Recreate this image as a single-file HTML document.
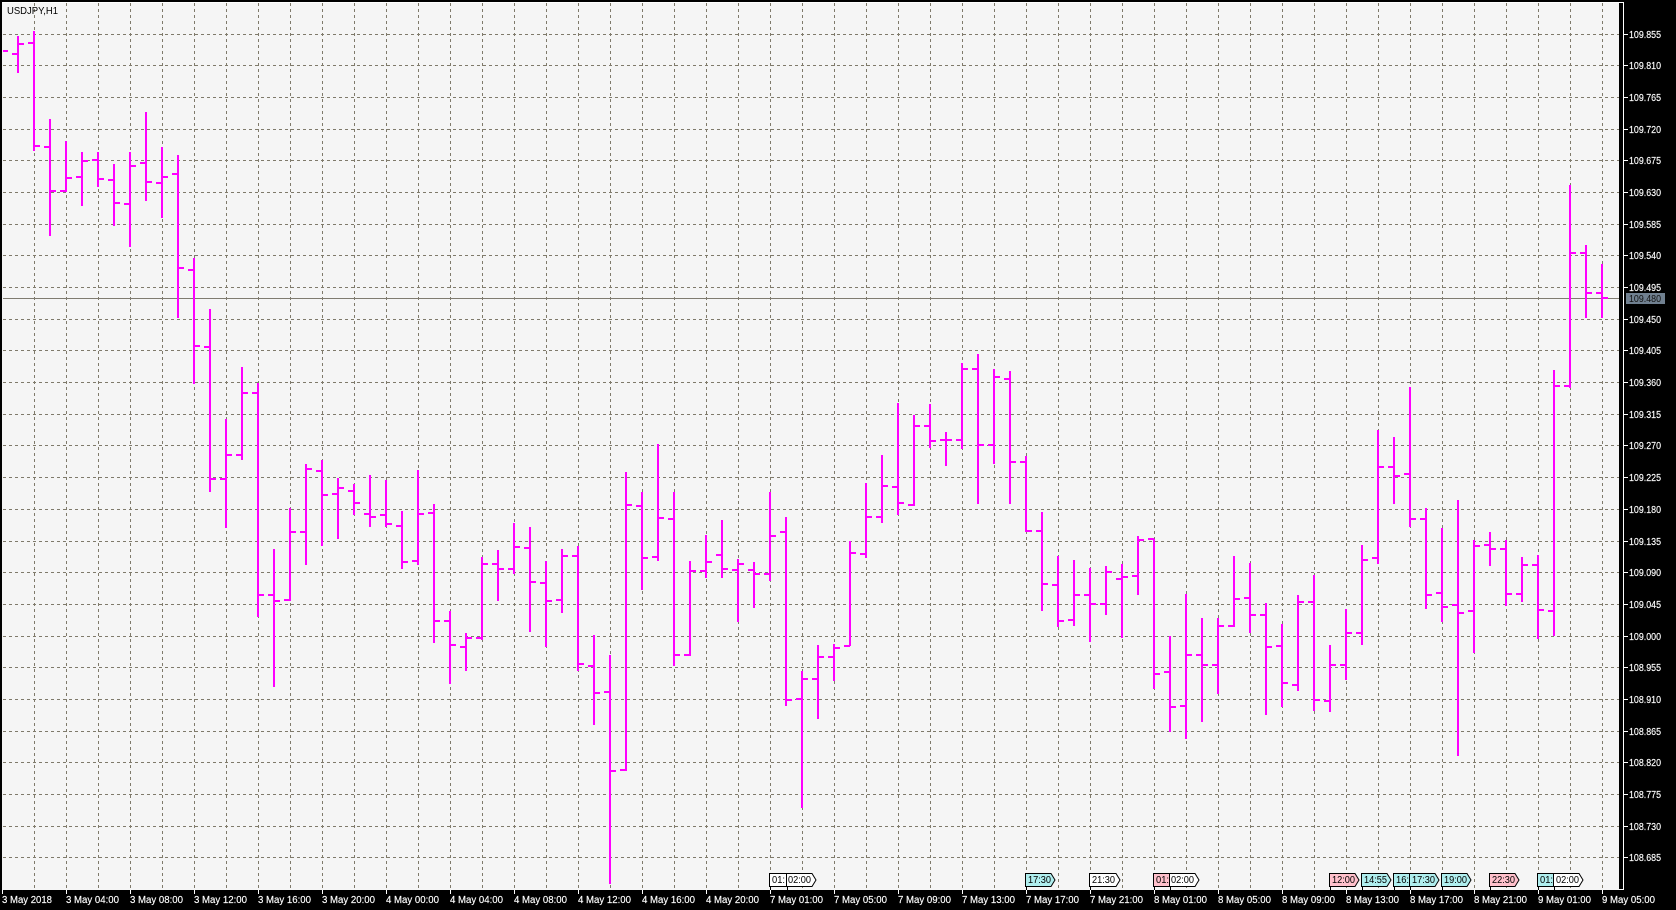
<!DOCTYPE html>
<html lang="en">
<head>
<meta charset="utf-8">
<title>USDJPY,H1</title>
<style>
html,body{margin:0;padding:0;background:#000;width:1676px;height:910px;overflow:hidden}
svg{display:block}
text{font-family:"Liberation Sans",sans-serif;font-size:10px}
.p text{fill:#fff;stroke:#fff;stroke-width:.15}
.t text{fill:#fff;stroke:#fff;stroke-width:.15}
.f path{stroke:#000;stroke-width:1}
.f text{fill:#000}
</style>
</head>
<body>
<svg xmlns="http://www.w3.org/2000/svg" width="1676" height="910" viewBox="0 0 1676 910">
<rect x="0" y="0" width="1676" height="910" fill="#000"/>
<rect x="2" y="3" width="1617" height="887" fill="#f5f5f5"/>
<g shape-rendering="crispEdges">
<path fill="none" stroke="#fff" d="M2 2.5H1623.5V889.5H1619"/>
<path fill="none" stroke="#7f7a6b" stroke-dasharray="3 3" d="M3 34.5H1619M3 65.5H1619M3 97.5H1619M3 129.5H1619M3 160.5H1619M3 192.5H1619M3 224.5H1619M3 255.5H1619M3 287.5H1619M3 319.5H1619M3 350.5H1619M3 382.5H1619M3 414.5H1619M3 445.5H1619M3 477.5H1619M3 509.5H1619M3 541.5H1619M3 572.5H1619M3 604.5H1619M3 636.5H1619M3 667.5H1619M3 699.5H1619M3 731.5H1619M3 762.5H1619M3 794.5H1619M3 826.5H1619M3 857.5H1619"/>
<path fill="none" stroke="#7f7a6b" stroke-dasharray="3 3" d="M34.5 3V890M66.5 3V890M98.5 3V890M130.5 3V890M162.5 3V890M194.5 3V890M226.5 3V890M258.5 3V890M290.5 3V890M322.5 3V890M354.5 3V890M386.5 3V890M418.5 3V890M450.5 3V890M482.5 3V890M514.5 3V890M546.5 3V890M578.5 3V890M610.5 3V890M642.5 3V890M674.5 3V890M706.5 3V890M738.5 3V890M770.5 3V890M802.5 3V890M834.5 3V890M866.5 3V890M898.5 3V890M930.5 3V890M962.5 3V890M994.5 3V890M1026.5 3V890M1058.5 3V890M1090.5 3V890M1122.5 3V890M1154.5 3V890M1186.5 3V890M1218.5 3V890M1250.5 3V890M1282.5 3V890M1314.5 3V890M1346.5 3V890M1378.5 3V890M1410.5 3V890M1442.5 3V890M1474.5 3V890M1506.5 3V890M1538.5 3V890M1570.5 3V890M1602.5 3V890"/>
<path fill="none" stroke="#7f7b70" d="M3 298.5H1619"/>
<path fill="none" stroke="#ff00ff" stroke-width="2" d="M3 51H8
M18 36V73M12 54H18M18 44H24
M34 31V151M28 43H34M34 146H40
M50 119V236M44 147H50M50 191H56
M66 141V192M60 191H66M66 178H72
M82 152V206M76 177H82M82 161H88
M98 152V187M92 160H98M98 179H104
M114 164V226M108 180H114M114 203H120
M130 152V247M124 204H130M130 166H136
M146 112V201M140 163H146M146 182H152
M162 147V218M156 183H162M162 177H168
M178 155V318M172 174H178M178 268H184
M194 258V384M188 270H194M194 346H200
M210 309V492M204 347H210M210 479H216
M226 419V528M220 479H226M226 455H232
M242 367V460M236 455H242M242 393H248
M258 383V617M252 393H258M258 595H264
M274 549V687M268 595H274M274 601H280
M290 508V601M284 600H290M290 532H296
M306 464V565M300 532H306M306 469H312
M322 460V546M316 471H322M322 495H328
M338 478V539M332 494H338M338 488H344
M354 484V515M348 491H354M354 503H360
M370 475V527M364 514H370M370 517H376
M386 480V527M380 515H386M386 524H392
M402 511V569M396 526H402M402 562H408
M418 470V565M412 561H418M418 514H424
M434 504V643M428 513H434M434 621H440
M450 611V684M444 621H450M450 645H456
M466 633V671M460 647H466M466 638H472
M482 557V640M476 638H482M482 564H488
M498 550V601M492 564H498M498 569H504
M514 523V574M508 569H514M514 547H520
M530 527V632M524 548H530M530 582H536
M546 561V647M540 583H546M546 601H552
M562 549V613M556 600H562M562 556H568
M578 546V671M572 556H578M578 664H584
M594 635V725M588 666H594M594 693H600
M610 655V884M604 692H610M610 771H616
M626 472V771M620 770H626M626 505H632
M642 492V590M636 506H642M642 558H648
M658 444V561M652 557H658M658 518H664
M674 492V666M668 519H674M674 655H680
M690 561V656M684 655H690M690 571H696
M706 535V578M700 571H706M706 562H712
M722 520V578M716 555H722M722 569H728
M738 559V622M732 570H738M738 564H744
M754 562V608M748 570H754M754 574H760
M770 492V581M764 574H770M770 536H776
M786 517V706M780 532H786M786 700H792
M802 671V808M796 699H802M802 679H808
M818 645V719M812 679H818M818 657H824
M834 644V681M828 657H834M834 648H840
M850 541V646M844 646H850M850 553H856
M866 483V558M860 554H866M866 517H872
M882 455V523M876 517H882M882 486H888
M898 403V515M892 487H898M898 503H904
M914 415V506M908 505H914M914 426H920
M930 404V448M924 426H930M930 441H936
M946 432V466M940 440H946M946 440H952
M962 363V449M956 440H962M962 369H968
M978 354V504M972 369H978M978 445H984
M994 369V464M988 445H994M994 377H1000
M1010 371V504M1004 379H1010M1010 462H1016
M1026 456V532M1020 462H1026M1026 531H1032
M1042 512V611M1036 531H1042M1042 584H1048
M1058 556V627M1052 585H1058M1058 621H1064
M1074 560V626M1068 620H1074M1074 595H1080
M1090 568V642M1084 595H1090M1090 604H1096
M1106 566V615M1100 604H1106M1106 572H1112
M1122 564V638M1116 579H1122M1122 577H1128
M1138 536V595M1132 576H1138M1138 540H1144
M1154 539V689M1148 539H1154M1154 674H1160
M1170 636V732M1164 672H1170M1170 707H1176
M1186 594V739M1180 706H1186M1186 655H1192
M1202 618V722M1196 655H1202M1202 665H1208
M1218 618V694M1212 665H1218M1218 626H1224
M1234 556V627M1228 626H1234M1234 599H1240
M1250 563V633M1244 598H1250M1250 615H1256
M1266 603V715M1260 615H1266M1266 647H1272
M1282 624V707M1276 646H1282M1282 683H1288
M1298 595V691M1292 685H1298M1298 602H1304
M1314 575V711M1308 602H1314M1314 700H1320
M1330 645V712M1324 701H1330M1330 665H1336
M1346 609V680M1340 665H1346M1346 633H1352
M1362 545V645M1356 633H1362M1362 560H1368
M1378 430V564M1372 558H1378M1378 467H1384
M1394 437V504M1388 467H1394M1394 476H1400
M1410 387V527M1404 474H1410M1410 519H1416
M1426 508V609M1420 519H1426M1426 595H1432
M1442 528V622M1436 593H1442M1442 607H1448
M1458 500V756M1452 605H1458M1458 613H1464
M1474 540V653M1468 611H1474M1474 546H1480
M1490 532V566M1484 545H1490M1490 549H1496
M1506 540V606M1500 549H1506M1506 594H1512
M1522 557V602M1516 594H1522M1522 565H1528
M1538 555V639M1532 565H1538M1538 610H1544
M1554 370V636M1548 611H1554M1554 386H1560
M1570 185V388M1564 386H1570M1570 253H1576
M1586 245V318M1580 253H1586M1586 293H1592
M1602 264V318M1596 293H1602M1602 298H1608"/>
<path fill="none" stroke="#fff" d="M1624 34.5H1628M1624 65.5H1628M1624 97.5H1628M1624 129.5H1628M1624 160.5H1628M1624 192.5H1628M1624 224.5H1628M1624 255.5H1628M1624 287.5H1628M1624 319.5H1628M1624 350.5H1628M1624 382.5H1628M1624 414.5H1628M1624 445.5H1628M1624 477.5H1628M1624 509.5H1628M1624 541.5H1628M1624 572.5H1628M1624 604.5H1628M1624 636.5H1628M1624 667.5H1628M1624 699.5H1628M1624 731.5H1628M1624 762.5H1628M1624 794.5H1628M1624 826.5H1628M1624 857.5H1628"/>
<path fill="none" stroke="#fff" d="M2.5 890V894M66.5 890V894M130.5 890V894M194.5 890V894M258.5 890V894M322.5 890V894M386.5 890V894M450.5 890V894M514.5 890V894M578.5 890V894M642.5 890V894M706.5 890V894M770.5 890V894M834.5 890V894M898.5 890V894M962.5 890V894M1026.5 890V894M1090.5 890V894M1154.5 890V894M1218.5 890V894M1282.5 890V894M1346.5 890V894M1410.5 890V894M1474.5 890V894M1538.5 890V894M1602.5 890V894"/>
<rect x="1626" y="293" width="39" height="11" fill="#708090"/>
</g>
<text x="7" y="14" textLength="51" lengthAdjust="spacingAndGlyphs" fill="#000">USDJPY,H1</text>
<g class="p">
<text x="1629" y="38" textLength="32" lengthAdjust="spacingAndGlyphs">109.855</text>
<text x="1629" y="69" textLength="32" lengthAdjust="spacingAndGlyphs">109.810</text>
<text x="1629" y="101" textLength="32" lengthAdjust="spacingAndGlyphs">109.765</text>
<text x="1629" y="133" textLength="32" lengthAdjust="spacingAndGlyphs">109.720</text>
<text x="1629" y="164" textLength="32" lengthAdjust="spacingAndGlyphs">109.675</text>
<text x="1629" y="196" textLength="32" lengthAdjust="spacingAndGlyphs">109.630</text>
<text x="1629" y="228" textLength="32" lengthAdjust="spacingAndGlyphs">109.585</text>
<text x="1629" y="259" textLength="32" lengthAdjust="spacingAndGlyphs">109.540</text>
<text x="1629" y="291" textLength="32" lengthAdjust="spacingAndGlyphs">109.495</text>
<text x="1629" y="323" textLength="32" lengthAdjust="spacingAndGlyphs">109.450</text>
<text x="1629" y="354" textLength="32" lengthAdjust="spacingAndGlyphs">109.405</text>
<text x="1629" y="386" textLength="32" lengthAdjust="spacingAndGlyphs">109.360</text>
<text x="1629" y="418" textLength="32" lengthAdjust="spacingAndGlyphs">109.315</text>
<text x="1629" y="449" textLength="32" lengthAdjust="spacingAndGlyphs">109.270</text>
<text x="1629" y="481" textLength="32" lengthAdjust="spacingAndGlyphs">109.225</text>
<text x="1629" y="513" textLength="32" lengthAdjust="spacingAndGlyphs">109.180</text>
<text x="1629" y="545" textLength="32" lengthAdjust="spacingAndGlyphs">109.135</text>
<text x="1629" y="576" textLength="32" lengthAdjust="spacingAndGlyphs">109.090</text>
<text x="1629" y="608" textLength="32" lengthAdjust="spacingAndGlyphs">109.045</text>
<text x="1629" y="640" textLength="32" lengthAdjust="spacingAndGlyphs">109.000</text>
<text x="1629" y="671" textLength="32" lengthAdjust="spacingAndGlyphs">108.955</text>
<text x="1629" y="703" textLength="32" lengthAdjust="spacingAndGlyphs">108.910</text>
<text x="1629" y="735" textLength="32" lengthAdjust="spacingAndGlyphs">108.865</text>
<text x="1629" y="766" textLength="32" lengthAdjust="spacingAndGlyphs">108.820</text>
<text x="1629" y="798" textLength="32" lengthAdjust="spacingAndGlyphs">108.775</text>
<text x="1629" y="830" textLength="32" lengthAdjust="spacingAndGlyphs">108.730</text>
<text x="1629" y="861" textLength="32" lengthAdjust="spacingAndGlyphs">108.685</text>
</g>
<text x="1629" y="302" textLength="32" lengthAdjust="spacingAndGlyphs" fill="#111">109.480</text>
<g class="t">
<text x="2" y="903" textLength="50" lengthAdjust="spacingAndGlyphs">3 May 2018</text>
<text x="66" y="903" textLength="53" lengthAdjust="spacingAndGlyphs">3 May 04:00</text>
<text x="130" y="903" textLength="53" lengthAdjust="spacingAndGlyphs">3 May 08:00</text>
<text x="194" y="903" textLength="53" lengthAdjust="spacingAndGlyphs">3 May 12:00</text>
<text x="258" y="903" textLength="53" lengthAdjust="spacingAndGlyphs">3 May 16:00</text>
<text x="322" y="903" textLength="53" lengthAdjust="spacingAndGlyphs">3 May 20:00</text>
<text x="386" y="903" textLength="53" lengthAdjust="spacingAndGlyphs">4 May 00:00</text>
<text x="450" y="903" textLength="53" lengthAdjust="spacingAndGlyphs">4 May 04:00</text>
<text x="514" y="903" textLength="53" lengthAdjust="spacingAndGlyphs">4 May 08:00</text>
<text x="578" y="903" textLength="53" lengthAdjust="spacingAndGlyphs">4 May 12:00</text>
<text x="642" y="903" textLength="53" lengthAdjust="spacingAndGlyphs">4 May 16:00</text>
<text x="706" y="903" textLength="53" lengthAdjust="spacingAndGlyphs">4 May 20:00</text>
<text x="770" y="903" textLength="53" lengthAdjust="spacingAndGlyphs">7 May 01:00</text>
<text x="834" y="903" textLength="53" lengthAdjust="spacingAndGlyphs">7 May 05:00</text>
<text x="898" y="903" textLength="53" lengthAdjust="spacingAndGlyphs">7 May 09:00</text>
<text x="962" y="903" textLength="53" lengthAdjust="spacingAndGlyphs">7 May 13:00</text>
<text x="1026" y="903" textLength="53" lengthAdjust="spacingAndGlyphs">7 May 17:00</text>
<text x="1090" y="903" textLength="53" lengthAdjust="spacingAndGlyphs">7 May 21:00</text>
<text x="1154" y="903" textLength="53" lengthAdjust="spacingAndGlyphs">8 May 01:00</text>
<text x="1218" y="903" textLength="53" lengthAdjust="spacingAndGlyphs">8 May 05:00</text>
<text x="1282" y="903" textLength="53" lengthAdjust="spacingAndGlyphs">8 May 09:00</text>
<text x="1346" y="903" textLength="53" lengthAdjust="spacingAndGlyphs">8 May 13:00</text>
<text x="1410" y="903" textLength="53" lengthAdjust="spacingAndGlyphs">8 May 17:00</text>
<text x="1474" y="903" textLength="53" lengthAdjust="spacingAndGlyphs">8 May 21:00</text>
<text x="1538" y="903" textLength="53" lengthAdjust="spacingAndGlyphs">9 May 01:00</text>
<text x="1602" y="903" textLength="53" lengthAdjust="spacingAndGlyphs">9 May 05:00</text>
</g>
<g class="f">
<path shape-rendering="crispEdges" fill="#ffffff" d="M769.5 873.5H786.5V886.5H769.5Z M770.5 887V890"/>
<text x="772" y="883" textLength="13" lengthAdjust="spacingAndGlyphs">01:</text>
<path fill="#ffffff" d="M786.5 873.5H812L816 880L812 886.5H786.5ZM787.5 887V890"/>
<text x="788" y="883" textLength="23" lengthAdjust="spacingAndGlyphs">02:00</text>

<path fill="#afeeee" d="M1025.5 873.5H1051L1055 880L1051 886.5H1025.5ZM1026.5 887V890"/>
<text x="1028" y="883" textLength="23" lengthAdjust="spacingAndGlyphs">17:30</text>

<path fill="#ffffff" d="M1089.5 873.5H1116L1120 880L1116 886.5H1089.5ZM1090.5 887V890"/>
<text x="1092" y="883" textLength="23" lengthAdjust="spacingAndGlyphs">21:30</text>

<path fill="#ffc0cb" d="M1153.5 873.5H1169.5V886.5H1153.5ZM1154.5 887V890"/>
<text x="1156" y="883" textLength="13" lengthAdjust="spacingAndGlyphs">01:</text>
<path fill="#ffffff" d="M1169.5 873.5H1195L1199 880L1195 886.5H1169.5ZM1170.5 887V890"/>
<text x="1171" y="883" textLength="23" lengthAdjust="spacingAndGlyphs">02:00</text>

<path fill="#ffc0cb" d="M1329.5 873.5H1355L1359 880L1355 886.5H1329.5ZM1330.5 887V890"/>
<text x="1332" y="883" textLength="23" lengthAdjust="spacingAndGlyphs">12:00</text>

<path fill="#afeeee" d="M1361.5 873.5H1387L1391 880L1387 886.5H1361.5ZM1362.5 887V890"/>
<text x="1364" y="883" textLength="23" lengthAdjust="spacingAndGlyphs">14:55</text>

<path fill="#afeeee" d="M1393.5 873.5H1409.5V886.5H1393.5ZM1394.5 887V890"/>
<text x="1396" y="883" textLength="13" lengthAdjust="spacingAndGlyphs">16:</text>
<path fill="#afeeee" d="M1409.5 873.5H1435L1439 880L1435 886.5H1409.5ZM1410.5 887V890"/>
<text x="1412" y="883" textLength="23" lengthAdjust="spacingAndGlyphs">17:30</text>

<path fill="#afeeee" d="M1441.5 873.5H1467L1471 880L1467 886.5H1441.5ZM1442.5 887V890"/>
<text x="1444" y="883" textLength="23" lengthAdjust="spacingAndGlyphs">19:00</text>

<path fill="#ffc0cb" d="M1489.5 873.5H1515L1519 880L1515 886.5H1489.5ZM1490.5 887V890"/>
<text x="1492" y="883" textLength="23" lengthAdjust="spacingAndGlyphs">22:30</text>

<path fill="#afeeee" d="M1537.5 873.5H1553.5V886.5H1537.5ZM1538.5 887V890"/>
<text x="1540" y="883" textLength="13" lengthAdjust="spacingAndGlyphs">01:</text>
<path fill="#ffffff" d="M1553.5 873.5H1579L1583 880L1579 886.5H1553.5ZM1554.5 887V890"/>
<text x="1556" y="883" textLength="23" lengthAdjust="spacingAndGlyphs">02:00</text>
</g>
</svg>
</body>
</html>
